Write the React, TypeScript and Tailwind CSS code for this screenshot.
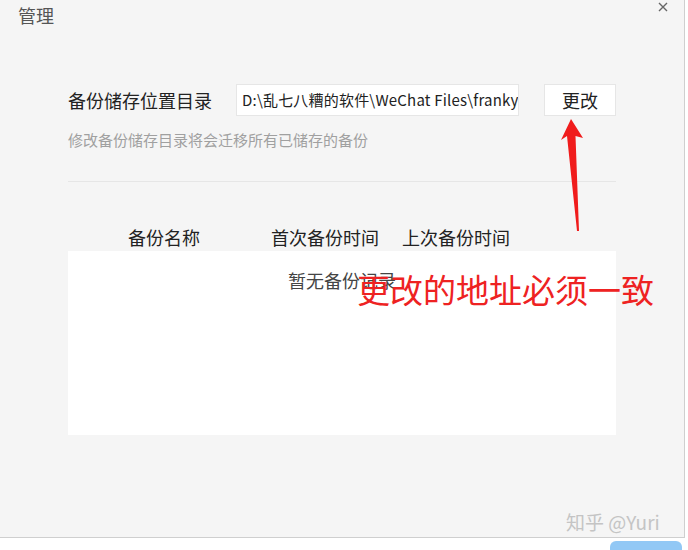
const cjk = "font-['Noto_Sans_CJK_SC','Noto_Sans',sans-serif]";

export default function App() {
  return (
    <div className={`relative w-[688px] h-[550px] overflow-hidden bg-white ${cjk}`}>
      {/* dialog window */}
      <div className="relative flex h-[538px] w-[685px] flex-col border-r border-b border-[#cfcfcf] bg-[#f5f5f5]">
        {/* title bar */}
        <div className="flex h-[30px] items-center pl-[18px] text-[18px] leading-none text-[#555]">
          管理
        </div>
        <svg
          className="absolute right-[16px] top-[2px]"
          width="10"
          height="10"
          viewBox="0 0 10 10"
        >
          <path d="M1 1L9 9M9 1L1 9" stroke="#666" strokeWidth="1.4" />
        </svg>

        <div className="flex flex-col pl-[68px] pr-[68px]">
          {/* directory row */}
          <div className="mt-[54px] flex h-[32px] items-center">
            <span className="w-[168px] text-[18px] leading-none text-[#222]">
              备份储存位置目录
            </span>
            <div className="flex h-[32px] w-[283px] items-center overflow-hidden whitespace-nowrap border border-[#e6e6e6] bg-white pl-[5px] text-[15px] tracking-[0.2px] text-[#222]">
              D:\乱七八糟的软件\WeChat Files\franky
            </div>
            <button className="ml-[25px] flex h-[32px] w-[72px] items-center justify-center border border-[#e6e6e6] bg-white text-[18px] text-[#222]">
              更改
            </button>
          </div>

          {/* hint */}
          <p className="mt-[14px] text-[15px] leading-[20px] text-[#a0a0a0]">
            修改备份储存目录将会迁移所有已储存的备份
          </p>

          <div className="mt-[31px] h-px w-[548px] bg-[#e6e6e6]" />

          {/* table headers */}
          <div className="mt-[43px] flex h-[24px] items-center pl-[60px] text-[18px] leading-none text-[#222]">
            <span className="w-[143px]">备份名称</span>
            <span className="w-[131px]">首次备份时间</span>
            <span>上次备份时间</span>
          </div>

          {/* table body */}
          <div className="mt-[2px] flex h-[184px] w-[548px] justify-center bg-white pt-[17px]">
            <span className="h-[24px] text-[18px] leading-[24px] text-[#444]">暂无备份记录</span>
          </div>
        </div>

        {/* watermark */}
        <div className="absolute left-[566px] top-[512px] text-[19px] leading-none text-[#c4c4c4]">
          知乎 @Yuri
        </div>
      </div>

      {/* bottom strip with button */}
      <div className="flex justify-end pr-[6px] pt-[3px]">
        <div className="h-[12px] w-[72px] rounded-t-[6px] bg-[#92c8f5]" />
      </div>

      {/* red annotation */}
      <div className="absolute left-[357px] top-[273px] whitespace-nowrap text-[33px] leading-none text-[#ee2222]">
        更改的地址必须一致
      </div>
      <svg className="absolute left-0 top-0" width="688" height="550" viewBox="0 0 688 550">
        <path
          d="M571 119 L583 138 L575.5 136 L579 231 L577 231 L567 136 L561 140 Z"
          fill="#f01c1c"
        />
      </svg>
    </div>
  );
}
